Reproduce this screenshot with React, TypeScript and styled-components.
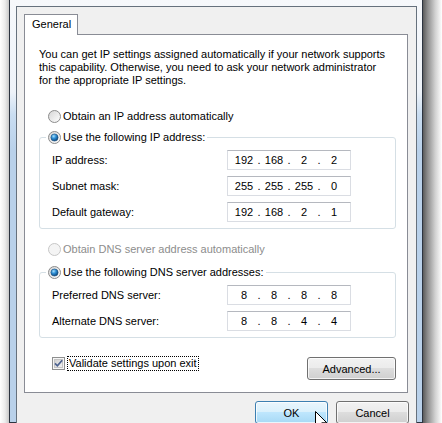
import React from 'react';
import styled, { createGlobalStyle } from 'styled-components';

const GlobalStyle = createGlobalStyle`
  html, body {
    margin: 0;
    padding: 0;
    background: #ffffff;
    overflow: hidden;
  }
  body {
    font-family: 'Segoe UI', 'Liberation Sans', Arial, sans-serif;
    font-size: 11px;
    color: #000000;
    white-space: nowrap;
  }
  * {
    box-sizing: border-box;
  }
`;

const Screen = styled.div`
  display: flex;
  width: 442px;
  height: 423px;
  overflow: hidden;
`;

const Shadow = styled.div<{ $side: 'left' | 'right' }>`
  flex: none;
  width: ${(p) => (p.$side === 'left' ? 9 : 19)}px;
  background: ${(p) =>
    p.$side === 'left'
      ? 'linear-gradient(to right, #ffffff, #ececec 55%, #c9c9c9)'
      : 'linear-gradient(to right, #5c5c5c, #8f8f8f 25%, #d2d2d2 65%, #ffffff)'};
`;

// glass frame round the dialog, whitish at the top and blue lower down
const Frame = styled.div`
  flex: none;
  display: flex;
  flex-direction: column;
  width: 414px;
  height: 423px;
  border: 1px solid #2c3440;
  border-top: none;
  padding: 6px 5px 0 6px;
  background: linear-gradient(
    to bottom,
    #f6f8fb 0,
    #eef3f9 92px,
    #c9ddf1 115px,
    #b9d1ea 150px,
    #b9d1ea 100%
  );
`;

const Client = styled.div`
  flex: 1;
  display: flex;
  flex-direction: column;
  border: 1px solid #66717d;
  border-bottom: none;
  background: #f0f0f0;
  padding: 7px 8px 0 7px;
`;

const TabStrip = styled.div`
  display: flex;
  height: 20px;
`;

const Tab = styled.div`
  position: relative;
  z-index: 1;
  width: 54px;
  height: 21px;
  margin-bottom: -1px;
  padding-left: 7px;
  line-height: 18px;
  background: #ffffff;
  border: 1px solid #898c95;
  border-bottom: none;
`;

const TabPage = styled.div`
  display: flex;
  flex-direction: column;
  height: 359px;
  border: 1px solid #898c95;
  background: #ffffff;
  padding: 13px 11px 0 14px;
`;

const Intro = styled.p`
  margin: 0;
  line-height: 13px;
`;

const RadioRow = styled.div<{ $top: number; $disabled?: boolean }>`
  display: flex;
  align-items: center;
  gap: 2px;
  height: 14px;
  line-height: 14px;
  margin: ${(p) => p.$top}px 0 0 9px;
  color: ${(p) => (p.$disabled ? '#8d8d8d' : '#000000')};
`;

const Group = styled.fieldset<{ $top: number }>`
  margin: ${(p) => p.$top}px 0 0 0;
  padding: 0;
  min-width: 0;
  width: 357px;
  border: 1px solid #d5dfe5;
  border-radius: 3px;
`;

const GroupLegend = styled.legend`
  display: flex;
  align-items: center;
  gap: 2px;
  height: 14px;
  line-height: 14px;
  margin-left: 6px;
  padding: 0 2px;
`;

const FieldGrid = styled.div`
  display: grid;
  grid-template-columns: 175px 124px;
  row-gap: 6px;
  align-items: center;
  padding: 6px 12px 6px;
`;

const FieldLabel = styled.span`
  line-height: 14px;
`;

const IpBox = styled.div`
  display: flex;
  align-items: center;
  width: 124px;
  height: 20px;
  padding-left: 4px;
  border: 1px solid #dadde3;
  border-top-color: #b5b8bf;
  background: #ffffff;
  line-height: 14px;
`;

const Octet = styled.span`
  width: 24px;
  text-align: center;
`;

const Dot = styled.span`
  width: 6px;
  text-align: center;
`;

const Footer = styled.div`
  display: flex;
  justify-content: space-between;
  align-items: flex-start;
  width: 357px;
  margin-top: 19px;
`;

const CheckLabel = styled.label`
  display: flex;
  align-items: center;
  gap: 2px;
  margin: -1px 0 0 13px;
`;

const FocusText = styled.span`
  height: 15px;
  line-height: 13px;
  padding: 0 1px;
  border: 1px dotted #000000;
`;

const Button = styled.button<{ $width: number; $hot?: boolean }>`
  position: relative;
  width: ${(p) => p.$width}px;
  height: 23px;
  padding: 0;
  font: inherit;
  color: #000000;
  border: 1px solid ${(p) => (p.$hot ? '#3c7fb1' : '#707070')};
  border-radius: 3px;
  box-shadow: inset 0 0 0 1px rgba(255, 255, 255, 0.75);
  background: ${(p) =>
    p.$hot
      ? 'linear-gradient(#eaf6fd 0%, #d9f0fc 50%, #bee6fd 50%, #a7d9f5 100%)'
      : 'linear-gradient(#f2f2f2 0%, #ebebeb 50%, #dddddd 50%, #cfcfcf 100%)'};
`;

const ButtonRow = styled.div`
  display: flex;
  justify-content: flex-end;
  gap: 8px;
  padding-top: 8px;
  margin-right: -1px;
`;

const Pointer = styled.svg`
  position: absolute;
  left: 59px;
  top: 9px;
  pointer-events: none;
`;

const RadioIcon = ({ checked, disabled }: { checked?: boolean; disabled?: boolean }) => (
  <svg width="13" height="13" viewBox="0 0 13 13">
    <defs>
      <linearGradient id="radioFill" x1="0" y1="0" x2="1" y2="1">
        <stop offset="0" stopColor="#d4d4d4" />
        <stop offset="1" stopColor="#ffffff" />
      </linearGradient>
      <radialGradient id="radioDot" cx="0.38" cy="0.32" r="0.7">
        <stop offset="0" stopColor="#a9e1fb" />
        <stop offset="0.45" stopColor="#2f8fd6" />
        <stop offset="1" stopColor="#0c4578" />
      </radialGradient>
    </defs>
    <circle
      cx="6.5"
      cy="6.5"
      r="6"
      fill={disabled ? '#f4f4f4' : 'url(#radioFill)'}
      stroke={disabled ? '#c6c6c6' : '#8c8c8c'}
    />
    {checked && <circle cx="6.5" cy="6.5" r="3.6" fill="url(#radioDot)" stroke="#1b4f7e" strokeWidth="0.6" />}
  </svg>
);

const CheckIcon = () => (
  <svg width="13" height="13" viewBox="0 0 13 13">
    <defs>
      <linearGradient id="checkFill" x1="0" y1="0" x2="1" y2="1">
        <stop offset="0" stopColor="#cfcfcf" />
        <stop offset="1" stopColor="#f4f4f4" />
      </linearGradient>
    </defs>
    <rect x="0.5" y="0.5" width="12" height="12" fill="#f6f6f6" stroke="#8e8f8f" />
    <rect x="2.5" y="2.5" width="8" height="8" fill="url(#checkFill)" stroke="#c4c4c4" />
    <path d="M3 6.3 L5.4 8.8 L10.2 3.2" fill="none" stroke="#4c6290" strokeWidth="1.7" />
  </svg>
);

const IpAddress = ({ value }: { value: string }) => {
  const parts = value.split('.');
  return (
    <IpBox>
      {parts.map((part, i) => (
        <React.Fragment key={i}>
          {i > 0 && <Dot>.</Dot>}
          <Octet>{part}</Octet>
        </React.Fragment>
      ))}
    </IpBox>
  );
};

const ipRows = [
  { label: 'IP address:', value: '192.168.2.2' },
  { label: 'Subnet mask:', value: '255.255.255.0' },
  { label: 'Default gateway:', value: '192.168.2.1' },
];

const dnsRows = [
  { label: 'Preferred DNS server:', value: '8.8.8.8' },
  { label: 'Alternate DNS server:', value: '8.8.4.4' },
];

export default function App() {
  return (
    <>
      <GlobalStyle />
      <Screen>
        <Shadow $side="left" />
        <Frame>
          <Client>
            <TabStrip>
              <Tab>General</Tab>
            </TabStrip>
            <TabPage>
              <Intro>
                You can get IP settings assigned automatically if your network supports
                <br />
                this capability. Otherwise, you need to ask your network administrator
                <br />
                for the appropriate IP settings.
              </Intro>

              <RadioRow $top={22}>
                <RadioIcon />
                Obtain an IP address automatically
              </RadioRow>
              <Group $top={7}>
                <GroupLegend>
                  <RadioIcon checked />
                  Use the following IP address:
                </GroupLegend>
                <FieldGrid>
                  {ipRows.map((row) => (
                    <React.Fragment key={row.label}>
                      <FieldLabel>{row.label}</FieldLabel>
                      <IpAddress value={row.value} />
                    </React.Fragment>
                  ))}
                </FieldGrid>
              </Group>

              <RadioRow $top={13} $disabled>
                <RadioIcon disabled />
                Obtain DNS server address automatically
              </RadioRow>
              <Group $top={9}>
                <GroupLegend>
                  <RadioIcon checked />
                  Use the following DNS server addresses:
                </GroupLegend>
                <FieldGrid>
                  {dnsRows.map((row) => (
                    <React.Fragment key={row.label}>
                      <FieldLabel>{row.label}</FieldLabel>
                      <IpAddress value={row.value} />
                    </React.Fragment>
                  ))}
                </FieldGrid>
              </Group>

              <Footer>
                <CheckLabel>
                  <CheckIcon />
                  <FocusText>Validate settings upon exit</FocusText>
                </CheckLabel>
                <Button $width={89}>Advanced...</Button>
              </Footer>
            </TabPage>

            <ButtonRow>
              <Button $width={73} $hot>
                OK
                <Pointer width="13" height="20" viewBox="0 0 13 20">
                  <path
                    d="M0.5 0.5 V16.5 L4.5 12.7 L7.3 19 L9.6 18 L6.8 11.8 H11.8 Z"
                    fill="#ffffff"
                    stroke="#000000"
                    strokeLinejoin="miter"
                  />
                </Pointer>
              </Button>
              <Button $width={73}>Cancel</Button>
            </ButtonRow>
          </Client>
        </Frame>
        <Shadow $side="right" />
      </Screen>
    </>
  );
}
